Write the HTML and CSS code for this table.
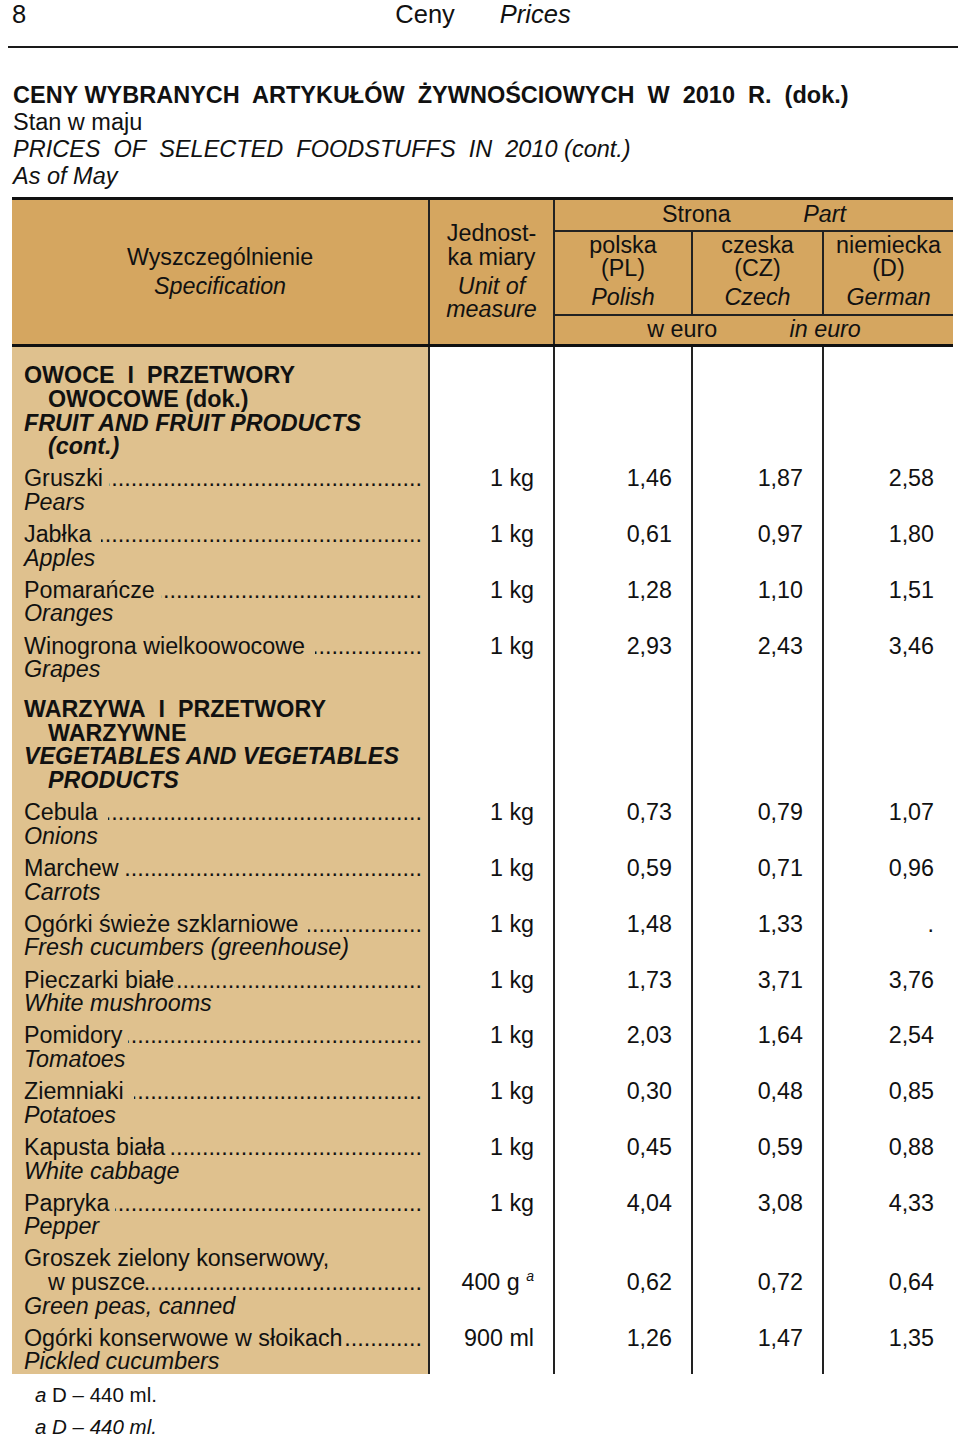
FILE: index.html
```html
<!DOCTYPE html>
<html lang="pl">
<head>
<meta charset="utf-8">
<title>Ceny – Prices</title>
<link rel="stylesheet" href="styles.css">
</head>
<body>
<header class="running">
  <span class="pageno">8</span>
  <span class="runtitle"><span>Ceny</span><i>Prices</i></span>
  <span></span>
</header>

<div class="title">
  <div class="t1">CENY WYBRANYCH&nbsp; ARTYKUŁÓW&nbsp; ŻYWNOŚCIOWYCH&nbsp; W&nbsp; 2010&nbsp; R.&nbsp; (dok.)</div>
  <div>Stan w maju</div>
  <div class="it">PRICES&nbsp; OF&nbsp; SELECTED&nbsp; FOODSTUFFS&nbsp; IN&nbsp; 2010 (cont.)</div>
  <div class="it">As of May</div>
</div>

<table class="prices">
  <colgroup>
    <col class="c-spec"><col class="c-unit"><col class="c-pl"><col class="c-cz"><col class="c-d">
  </colgroup>
  <thead>
    <tr>
      <th rowspan="3" class="h-spec"><div>Wyszczególnienie</div><div class="en">Specification</div></th>
      <th rowspan="3" class="h-unit"><div>Jednost-</div><div>ka miary</div><div class="en">Unit of<br>measure</div></th>
      <th colspan="3" class="h-part">Strona <i class="gap">Part</i></th>
    </tr>
    <tr>
      <th class="h-c sep">polska<br>(PL)<div class="en">Polish</div></th>
      <th class="h-c sep">czeska<br>(CZ)<div class="en">Czech</div></th>
      <th class="h-c">niemiecka<br>(D)<div class="en">German</div></th>
    </tr>
    <tr>
      <th colspan="3" class="h-cur">w euro <i class="gap">in euro</i></th>
    </tr>
  </thead>
  <tbody>
    <tr class="sec first">
      <td class="spec"><div class="b">OWOCE&nbsp; I&nbsp; PRZETWORY</div><div class="b ind">OWOCOWE (dok.)</div><div class="b it">FRUIT AND FRUIT PRODUCTS</div><div class="b it ind">(cont.)</div></td>
      <td class="num"></td><td class="num"></td><td class="num"></td><td class="num"></td>
    </tr>
    <tr>
      <td class="spec"><div class="lead"><span>Gruszki</span><span class="dots sp"></span></div><div class="en">Pears</div></td>
      <td class="num">1 kg</td><td class="num">1,46</td><td class="num">1,87</td><td class="num">2,58</td>
    </tr>
    <tr>
      <td class="spec"><div class="lead"><span>Jabłka</span><span class="dots sp2"></span></div><div class="en">Apples</div></td>
      <td class="num">1 kg</td><td class="num">0,61</td><td class="num">0,97</td><td class="num">1,80</td>
    </tr>
    <tr>
      <td class="spec"><div class="lead"><span>Pomarańcze</span><span class="dots sp"></span></div><div class="en">Oranges</div></td>
      <td class="num">1 kg</td><td class="num">1,28</td><td class="num">1,10</td><td class="num">1,51</td>
    </tr>
    <tr>
      <td class="spec"><div class="lead"><span>Winogrona wielkoowocowe</span><span class="dots sp2"></span></div><div class="en">Grapes</div></td>
      <td class="num">1 kg</td><td class="num">2,93</td><td class="num">2,43</td><td class="num">3,46</td>
    </tr>
    <tr class="sec">
      <td class="spec"><div class="b">WARZYWA&nbsp; I&nbsp; PRZETWORY</div><div class="b ind">WARZYWNE</div><div class="b it">VEGETABLES AND VEGETABLES</div><div class="b it ind">PRODUCTS</div></td>
      <td class="num"></td><td class="num"></td><td class="num"></td><td class="num"></td>
    </tr>
    <tr>
      <td class="spec"><div class="lead"><span>Cebula</span><span class="dots sp2"></span></div><div class="en">Onions</div></td>
      <td class="num">1 kg</td><td class="num">0,73</td><td class="num">0,79</td><td class="num">1,07</td>
    </tr>
    <tr>
      <td class="spec"><div class="lead"><span>Marchew</span><span class="dots sp"></span></div><div class="en">Carrots</div></td>
      <td class="num">1 kg</td><td class="num">0,59</td><td class="num">0,71</td><td class="num">0,96</td>
    </tr>
    <tr>
      <td class="spec"><div class="lead"><span>Ogórki świeże szklarniowe</span><span class="dots sp2"></span></div><div class="en">Fresh cucumbers (greenhouse)</div></td>
      <td class="num">1 kg</td><td class="num">1,48</td><td class="num">1,33</td><td class="num">.</td>
    </tr>
    <tr>
      <td class="spec"><div class="lead"><span>Pieczarki białe</span><span class="dots"></span></div><div class="en">White mushrooms</div></td>
      <td class="num">1 kg</td><td class="num">1,73</td><td class="num">3,71</td><td class="num">3,76</td>
    </tr>
    <tr>
      <td class="spec"><div class="lead"><span>Pomidory</span><span class="dots sp"></span></div><div class="en">Tomatoes</div></td>
      <td class="num">1 kg</td><td class="num">2,03</td><td class="num">1,64</td><td class="num">2,54</td>
    </tr>
    <tr>
      <td class="spec"><div class="lead"><span>Ziemniaki</span><span class="dots sp2"></span></div><div class="en">Potatoes</div></td>
      <td class="num">1 kg</td><td class="num">0,30</td><td class="num">0,48</td><td class="num">0,85</td>
    </tr>
    <tr>
      <td class="spec"><div class="lead"><span>Kapusta biała</span><span class="dots sp"></span></div><div class="en">White cabbage</div></td>
      <td class="num">1 kg</td><td class="num">0,45</td><td class="num">0,59</td><td class="num">0,88</td>
    </tr>
    <tr>
      <td class="spec"><div class="lead"><span>Papryka</span><span class="dots sp"></span></div><div class="en">Pepper</div></td>
      <td class="num">1 kg</td><td class="num">4,04</td><td class="num">3,08</td><td class="num">4,33</td>
    </tr>
    <tr class="l2">
      <td class="spec"><div>Groszek zielony konserwowy,</div><div class="lead ind"><span>w puszce</span><span class="dots"></span></div><div class="en">Green peas, canned</div></td>
      <td class="num">400 g <sup class="fn">a</sup></td><td class="num">0,62</td><td class="num">0,72</td><td class="num">0,64</td>
    </tr>
    <tr class="last">
      <td class="spec"><div class="lead"><span>Ogórki konserwowe w słoikach</span><span class="dots"></span></div><div class="en">Pickled cucumbers</div></td>
      <td class="num">900 ml</td><td class="num">1,26</td><td class="num">1,47</td><td class="num">1,35</td>
    </tr>
  </tbody>
</table>

<div class="notes">
  <div><i>a</i> D – 440 ml.</div>
  <div class="it">a D – 440 ml.</div>
</div>
</body>
</html>
```

FILE: styles.css
```css
* { box-sizing: border-box; }

html, body {
  margin: 0;
  padding: 0;
  background: #ffffff;
}

body {
  width: 960px;
  font-family: "Liberation Sans", Arial, sans-serif;
  color: #111111;
}

.running {
  display: grid;
  grid-template-columns: 1fr auto 1fr;
  margin-left: 8px;
  width: 950px;
  height: 48px;
  border-bottom: 2px solid #1a1a1a;
  font-size: 25.5px;
  line-height: 28px;
}

.pageno { padding-left: 4px; }

.runtitle {
  display: flex;
  gap: 45px;
}

.title {
  margin: 33.5px 0 0 13px;
  font-size: 23.5px;
  line-height: 27px;
}

.title .t1 { font-weight: bold; }

.it { font-style: italic; }
.b { font-weight: bold; }
.ind { padding-left: 24px; }

/* ---------- table ---------- */
.prices {
  margin: 7.5px 0 0 12px;
  width: 941px;
  border-collapse: collapse;
  table-layout: fixed;
  font-size: 23.3px;
  line-height: 23.6px;
}

.c-spec { width: 417px; }
.c-unit { width: 125px; }
.c-pl { width: 138px; }
.c-cz { width: 131px; }
.c-d { width: 130px; }

.prices th {
  padding: 0;
  font-weight: normal;
  background: #d5a660;
  text-align: center;
  vertical-align: middle;
}

.prices thead tr:first-child th { border-top: 3px solid #111111; }

.prices .h-spec,
.prices .h-unit {
  border-right: 2px solid #222222;
  border-bottom: 3px solid #111111;
}

.prices .h-part {
  padding: 3px 0 3px;
  border-bottom: 2px solid #222222;
}

.prices .h-c {
  padding: 2px 0 4px;
  border-bottom: 2px solid #222222;
}

.prices .h-c.sep { border-right: 2px solid #222222; }

.prices .h-cur {
  padding: 2.5px 0 2px;
  border-bottom: 3px solid #111111;
}

.gap { margin-left: 66px; }

.en {
  font-style: italic;
}

.prices th .en { margin-top: 5.4px; }

.prices td {
  padding: 8.6px 0 0 0;
  vertical-align: top;
}

.prices td.spec {
  padding-left: 12px;
  padding-right: 6px;
  background: #dfc18e;
  border-right: 2px solid #222222;
}

.prices td.num {
  padding-right: 19px;
  text-align: right;
  border-right: 2px solid #222222;
}

.prices td.num:last-child { border-right: none; }

.prices tr.sec td { padding-top: 16.4px; }
.prices tr.sec.first td { padding-top: 17.5px; }

.prices tr.l2 td.num { padding-top: 32.2px; }

.lead {
  display: flex;
  white-space: nowrap;
}

.lead > span:first-child { flex: none; }

.dots {
  flex: 1 1 0;
  min-width: 0;
  overflow: hidden;
  white-space: nowrap;
  direction: rtl;
}

.dots::after {
  content: "....................................................................................................";
}

.dots.sp { margin-left: 6px; }
.dots.sp2 { margin-left: 10px; }

.fn {
  font-size: 14px;
  font-style: italic;
  line-height: 0;
  vertical-align: 9px;
}

.notes {
  margin: 5px 0 0 35px;
  font-size: 20.5px;
  line-height: 32px;
}
```
